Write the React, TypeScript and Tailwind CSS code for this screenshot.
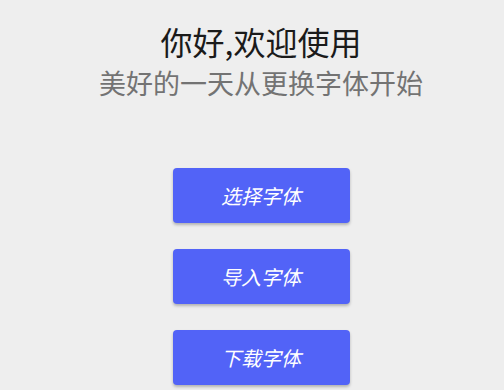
const font = { fontFamily: '"Noto Sans CJK SC", "Noto Sans", sans-serif' };

const actions = ["选择字体", "导入字体", "下载字体"];

export default function App() {
  return (
    <div
      className="w-[504px] h-[390px] bg-[#eeeeee] overflow-hidden pl-[18px] flex flex-col items-center"
      style={font}
    >
      <h1 className="mt-[20px] text-[32px] leading-[42px] text-[#1a1a1a]">
        你好,欢迎使用
      </h1>
      <p className="mt-[3px] text-[27px] leading-[36px] text-[#737373]">
        美好的一天从更换字体开始
      </p>
      <div className="mt-[67px] flex flex-col gap-[26px]">
        {actions.map((label) => (
          <button
            key={label}
            className="w-[177px] h-[55px] rounded-[4px] bg-[#5263f7] text-white text-[20px] italic shadow-[0_2px_3px_rgba(0,0,0,0.25)]"
          >
            {label}
          </button>
        ))}
      </div>
    </div>
  );
}
